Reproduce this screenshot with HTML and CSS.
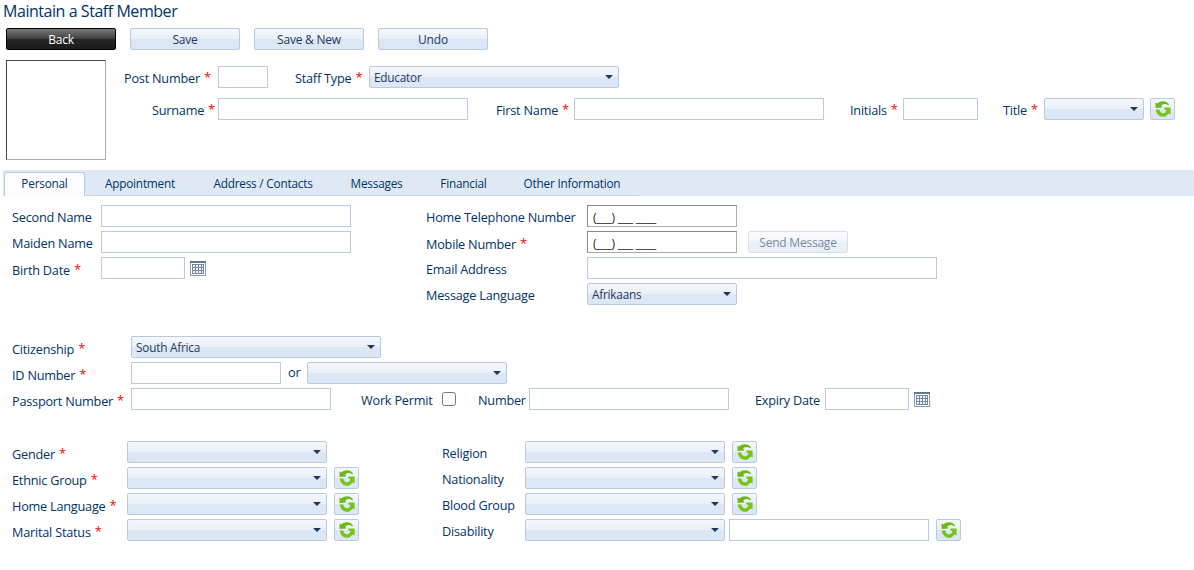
FILE: index.html
```html
<!DOCTYPE html>
<html>

	<head>
		<meta charset="UTF-8">
		<title>Maintain a Staff Member</title>
		<link rel="stylesheet" href="styles.css">
	</head>

	<body>
		<!-- shared icons -->
		<svg class="defs" width="0" height="0">
			<symbol id="refresh" viewBox="0 0 16 16">
				<path fill="#6cb81a" d="M0.5 1.4L2.4 2.6C5.4 -0.8 11.6 -0.6 14.2 3.6L13 4.2C10.8 2.6 8.4 2.8 6.2 4.6L7.4 6.6L0.5 7Z"/>
				<path fill="#78c416" d="M15.6 6.4H9.2V8.2L11.4 9C10.8 11.8 8.6 13 6.6 12C5.2 11.2 4.6 10 4.4 8.6H0.8C1 13.6 5.6 17.4 10.8 15.2L13.6 12.6L15.6 13.4Z"/>
			</symbol>
			<symbol id="calendar" viewBox="0 0 16 15">
				<path fill="#8c9ab2" d="M0 0H16V15H0Z"/>
				<path fill="#62769a" d="M0 0H16V2H0Z"/>
				<path fill="#fff" d="M1 2H15V14H1Z"/>
				<path fill="#75869f" d="M2 3H14V13H2Z"/>
				<path fill="#f4f6fa" d="M3 4h2v2h-2zM6 4h2v2h-2zM9 4h2v2h-2zM12 4h1v2h-1zM3 7h2v2h-2zM6 7h2v2h-2zM9 7h2v2h-2zM12 7h1v2h-1zM3 10h2v2h-2zM6 10h2v2h-2zM9 10h2v2h-2zM12 10h1v2h-1z"/>
			</symbol>
		</svg>

		<h1>Maintain a Staff Member</h1>
		<div class="toolbar">
			<button class="btn back">Back</button>
			<button class="btn">Save</button>
			<button class="btn">Save &amp; New</button>
			<button class="btn">Undo</button>
		</div>

		<div class="header">
			<div class="photo"></div>
			<div class="header_fields">
				<div class="row">
					<label class="l_post req">Post Number</label><input type="text" class="w50">
					<label class="l_type req">Staff Type</label><div class="combo w250">Educator</div>
				</div>
				<div class="row">
					<label class="l_surname req">Surname</label><input type="text" class="w250">
					<label class="l_first req">First Name</label><input type="text" class="w250">
					<label class="l_initials req">Initials</label><input type="text" class="w75">
					<label class="l_title req">Title</label><div class="combo w100">&nbsp;</div>
					<button class="refresh"><svg><use href="#refresh"/></svg></button>
				</div>
			</div>
		</div>

		<div class="tabs">
			<div class="tab active">Personal</div>
			<div class="tab t_app">Appointment</div>
			<div class="tab t_addr">Address / Contacts</div>
			<div class="tab t_msg">Messages</div>
			<div class="tab t_fin">Financial</div>
			<div class="tab t_other">Other Information</div>
		</div>

		<div class="block contact">
			<div class="left">
				<div class="row"><label>Second Name</label><input type="text" class="w250"></div>
				<div class="row"><label>Maiden Name</label><input type="text" class="w250"></div>
				<div class="row"><label class="req">Birth Date</label><input type="text" class="date"><svg class="cal"><use href="#calendar"/></svg></div>
			</div>
			<div class="right">
				<div class="row"><label>Home Telephone Number</label><input type="text" class="w150 mask" value="(___) ___ ____"></div>
				<div class="row"><label class="req">Mobile Number</label><input type="text" class="w150 mask" value="(___) ___ ____"><button class="btn send" disabled>Send Message</button></div>
				<div class="row"><label>Email Address</label><input type="text" class="w350"></div>
				<div class="row"><label>Message Language</label><div class="combo w150">Afrikaans</div></div>
			</div>
		</div>

		<div class="block identity">
			<div class="row"><label class="req">Citizenship</label><div class="combo w250">South Africa</div></div>
			<div class="row"><label class="req">ID Number</label><input type="text" class="w150"><span class="or">or</span><div class="combo w200">&nbsp;</div></div>
			<div class="row">
				<label class="req">Passport Number</label><input type="text" class="w200">
				<label class="l_permit">Work Permit</label><input type="checkbox">
				<label class="l_number">Number</label><input type="text" class="w200">
				<label class="l_expiry">Expiry Date</label><input type="text" class="date"><svg class="cal"><use href="#calendar"/></svg>
			</div>
		</div>

		<div class="block profile">
			<div class="left">
				<div class="row"><label class="req">Gender</label><div class="combo w200">&nbsp;</div></div>
				<div class="row"><label class="req">Ethnic Group</label><div class="combo w200">&nbsp;</div><button class="refresh"><svg><use href="#refresh"/></svg></button></div>
				<div class="row"><label class="req">Home Language</label><div class="combo w200">&nbsp;</div><button class="refresh"><svg><use href="#refresh"/></svg></button></div>
				<div class="row"><label class="req">Marital Status</label><div class="combo w200">&nbsp;</div><button class="refresh"><svg><use href="#refresh"/></svg></button></div>
			</div>
			<div class="right">
				<div class="row"><label>Religion</label><div class="combo w200">&nbsp;</div><button class="refresh"><svg><use href="#refresh"/></svg></button></div>
				<div class="row"><label>Nationality</label><div class="combo w200">&nbsp;</div><button class="refresh"><svg><use href="#refresh"/></svg></button></div>
				<div class="row"><label>Blood Group</label><div class="combo w200">&nbsp;</div><button class="refresh"><svg><use href="#refresh"/></svg></button></div>
				<div class="row"><label>Disability</label><div class="combo w200">&nbsp;</div><input type="text" class="w200 other"><button class="refresh"><svg><use href="#refresh"/></svg></button></div>
			</div>
		</div>
	</body>

</html>
```
FILE: styles.css
```css
*{ box-sizing: border-box; }
body{
	margin: 0;
	background: #fff;
	color: #003366;
	font: 12.7px/20px "Open Sans", "Noto Sans", sans-serif;
	letter-spacing: -0.22px;
}
.defs{ position: absolute; }
h1{
	margin: 0 0 5px 3px;
	font-size: 16px;
	font-weight: normal;
	line-height: 23px;
	letter-spacing: -0.45px;
}
button,input{
	font: inherit;
	letter-spacing: inherit;
	margin: 0;
}

/* buttons */
.toolbar{
	display: flex;
	gap: 14px;
	padding-left: 6px;
}
.btn,.combo,.refresh{
	height: 22px;
	border: 1px solid #b9c9de;
	border-radius: 2px;
	background: linear-gradient(#f5f8fc, #e9f0f9 50%, #dce7f5 50%, #dce7f5);
	color: #1e395b;
}
.btn{
	width: 110px;
	padding: 2px 0 0;
	font-size: 12px;
	line-height: 18px;
	text-align: center;
}
.back{
	border-color: #000;
	background: linear-gradient(#7b7b7b, #3d3d3d 50%, #252525 50%, #1c1c1c);
	color: #fff;
}
.send{
	width: 100px;
	margin-left: 11px;
	opacity: .6;
}
.refresh{
	width: 25px;
	margin-left: 7px;
	padding: 2px 4px;
}
.refresh svg{
	display: block;
	width: 16px;
	height: 16px;
}
.combo{
	display: flex;
	justify-content: space-between;
	align-items: center;
	padding: 0 5px 0 4px;
	font-size: 11.8px;
}
.combo:after{
	content: "";
	border: 4px solid transparent;
	border-top-color: #1e395b;
	border-bottom: 0;
}

/* fields */
.row{
	display: flex;
	height: 22px;
	margin-bottom: 4px;
}
label{
	padding-top: 2px;
	white-space: nowrap;
}
label.req{ padding-top: 3px; }
.req:after{
	content: "*";
	position: relative;
	top: -1px;
	margin-left: 4px;
	color: #f00;
	font-size: 13px;
	line-height: 1px;
}
input[type=text]{
	height: 22px;
	padding: 0 5px;
	border: 1px solid #b8cbe0;
	background: #fff;
}
input.mask{
	padding-top: 2px;
	border-color: #888 #aaa #aaa #888;
	color: #222;
	font-size: 12px;
	letter-spacing: -0.2px;
}
input[type=checkbox]{
	width: 14px;
	height: 14px;
	margin-top: 4px;
}
.w50{ width: 50px; }
.w75{ width: 75px; }
.w100{ width: 100px; }
.w150{ width: 150px; }
.w200{ width: 200px; }
.w250{ width: 250px; }
.w350{ width: 350px; }
.date{ width: 84px; }
.cal{
	width: 16px;
	height: 15px;
	margin: 4px 0 0 5px;
}

/* photo and name */
.header{
	display: flex;
	height: 120px;
	padding: 10px 0 0 6px;
}
.photo{
	width: 100px;
	height: 100px;
	border: 1px solid;
	border-color: #444 #aaa #aaa #444;
}
.header_fields{ padding: 6px 0 0 18px; }
.header_fields .row{ margin-bottom: 10px; }
.header_fields label{ padding-top: 2px; }
.header_fields .refresh{ margin-left: 6px; }
.l_post{ width: 94px; }
.l_type{ width: 74px; margin-left: 27px; }
.l_surname{ width: 66px; margin-left: 28px; }
.l_first{ width: 78px; margin-left: 28px; }
.l_initials{ width: 53px; margin-left: 26px; }
.l_title{ width: 41px; margin-left: 25px; }

/* tabs */
.tabs{
	display: flex;
	height: 26px;
	margin-left: 3px;
	background: #dfe9f5;
	font-size: 11.8px;
}
.tab{
	border-bottom: 1px solid #c5d5ea;
	line-height: 27px;
	text-align: center;
}
.active{
	width: 81px;
	margin: 2px 0 0 1px;
	border: 1px solid #b8cbe0;
	border-bottom: 0;
	border-radius: 3px 3px 0 0;
	background: #fdfdff;
	line-height: 21px;
}
.t_app{ width: 110px; }
.t_addr{ width: 136px; }
.t_msg{ width: 91px; }
.t_fin{ width: 83px; }
.t_other{ width: 134px; }

/* tab content */
.block{ padding-left: 12px; }
.contact,.profile{ display: flex; }
.contact{ height: 140px; padding-top: 9px; }
.contact .left{ width: 414px; }
.contact .left label{ width: 89px; }
.contact .right label{ width: 161px; }
.identity{ height: 105px; }
.identity label{ width: 119px; }
.or{ width: 26px; padding-left: 7px; }
.identity .l_permit{ width: 81px; margin-left: 30px; }
.identity .l_number{ width: 51px; margin-left: 22px; }
.identity .l_expiry{ width: 70px; margin-left: 26px; }
.profile .left{ width: 430px; }
.profile .left label{ width: 115px; }
.profile .right label{ width: 83px; }
.other{ margin-left: 4px; }
```
